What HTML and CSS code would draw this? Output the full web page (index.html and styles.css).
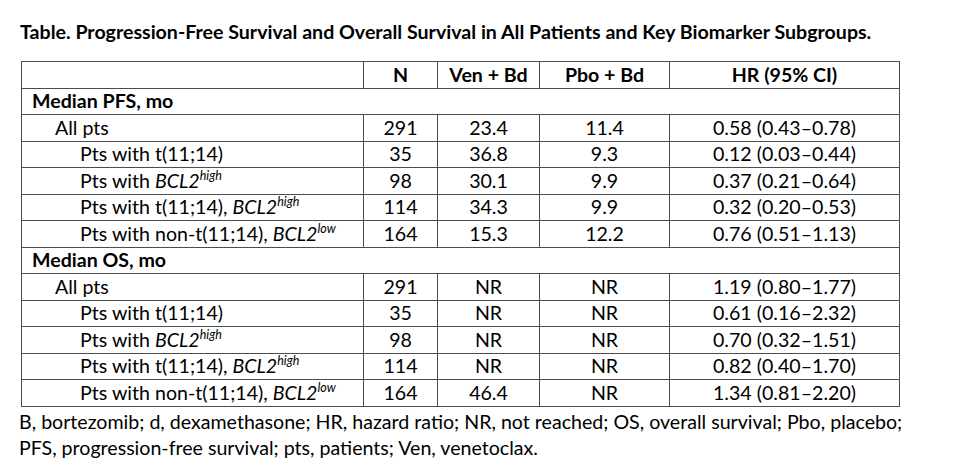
FILE: index.html
```html
<!DOCTYPE html>
<html>
<head>
<meta charset="utf-8">
<link rel="stylesheet" href="styles.css">
</head>
<body>
<div class="page">
  <h1 class="title">Table. Progression-Free Survival and Overall Survival in All Patients and Key Biomarker Subgroups.</h1>
  <table class="data">
    <colgroup>
      <col class="c-label"><col class="c-n"><col class="c-ven"><col class="c-pbo"><col class="c-hr">
    </colgroup>
    <thead>
      <tr><th></th><th>N</th><th>Ven + Bd</th><th>Pbo + Bd</th><th>HR (95% CI)</th></tr>
    </thead>
    <tbody>
      <tr><td class="section" colspan="5">Median PFS, mo</td></tr>
      <tr><td class="lvl1">All pts</td><td>291</td><td>23.4</td><td>11.4</td><td>0.58 (0.43–0.78)</td></tr>
      <tr><td class="lvl2">Pts with t(11;14)</td><td>35</td><td>36.8</td><td>9.3</td><td>0.12 (0.03–0.44)</td></tr>
      <tr><td class="lvl2">Pts with <i>BCL2<sup>high</sup></i></td><td>98</td><td>30.1</td><td>9.9</td><td>0.37 (0.21–0.64)</td></tr>
      <tr><td class="lvl2">Pts with t(11;14), <i>BCL2<sup>high</sup></i></td><td>114</td><td>34.3</td><td>9.9</td><td>0.32 (0.20–0.53)</td></tr>
      <tr><td class="lvl2">Pts with non-t(11;14), <i>BCL2<sup>low</sup></i></td><td>164</td><td>15.3</td><td>12.2</td><td>0.76 (0.51–1.13)</td></tr>
      <tr><td class="section" colspan="5">Median OS, mo</td></tr>
      <tr><td class="lvl1">All pts</td><td>291</td><td>NR</td><td>NR</td><td>1.19 (0.80–1.77)</td></tr>
      <tr><td class="lvl2">Pts with t(11;14)</td><td>35</td><td>NR</td><td>NR</td><td>0.61 (0.16–2.32)</td></tr>
      <tr><td class="lvl2">Pts with <i>BCL2<sup>high</sup></i></td><td>98</td><td>NR</td><td>NR</td><td>0.70 (0.32–1.51)</td></tr>
      <tr><td class="lvl2">Pts with t(11;14), <i>BCL2<sup>high</sup></i></td><td>114</td><td>NR</td><td>NR</td><td>0.82 (0.40–1.70)</td></tr>
      <tr><td class="lvl2">Pts with non-t(11;14), <i>BCL2<sup>low</sup></i></td><td>164</td><td>46.4</td><td>NR</td><td>1.34 (0.81–2.20)</td></tr>
    </tbody>
  </table>
  <p class="note">B, bortezomib; d, dexamethasone; HR, hazard ratio; NR, not reached; OS, overall survival; Pbo, placebo;<br>PFS, progression-free survival; pts, patients; Ven, venetoclax.</p>
</div>
</body>
</html>
```

FILE: styles.css
```css
html, body {
  margin: 0;
  padding: 0;
  background: #fff;
}
body {
  font-family: "Lato", "Open Sans", sans-serif;
  color: #000;
}
.page {
  padding: 21px 0 0 20px;
}
.title {
  margin: 0 0 18px 0;
  font-size: 19.6px;
  font-weight: 700;
  line-height: 22px;
}
.data {
  border-collapse: collapse;
  width: 878px;
  margin-left: 1px;
  font-size: 19.6px;
  table-layout: fixed;
}
.c-label { width: 342px; }
.c-n { width: 74px; }
.c-ven { width: 102px; }
.c-pbo { width: 130px; }
.c-hr { width: 230px; }
.data th, .data td {
  border: 1px solid #4d4d4d;
  height: 25.5px;
  padding: 0;
  text-align: center;
  line-height: 22px;
  white-space: nowrap;
}
.data th {
  font-weight: 700;
}
.data td.section {
  text-align: left;
  font-weight: 700;
  padding-left: 10px;
}
.data td.lvl1 {
  text-align: left;
  padding-left: 33px;
}
.data td.lvl2 {
  text-align: left;
  padding-left: 58px;
}
sup {
  font-size: 12.5px;
  line-height: 0;
  vertical-align: 8px;
}
.note {
  margin: 2px 0 0 -1px;
  font-size: 19.6px;
  line-height: 26px;
}
```
